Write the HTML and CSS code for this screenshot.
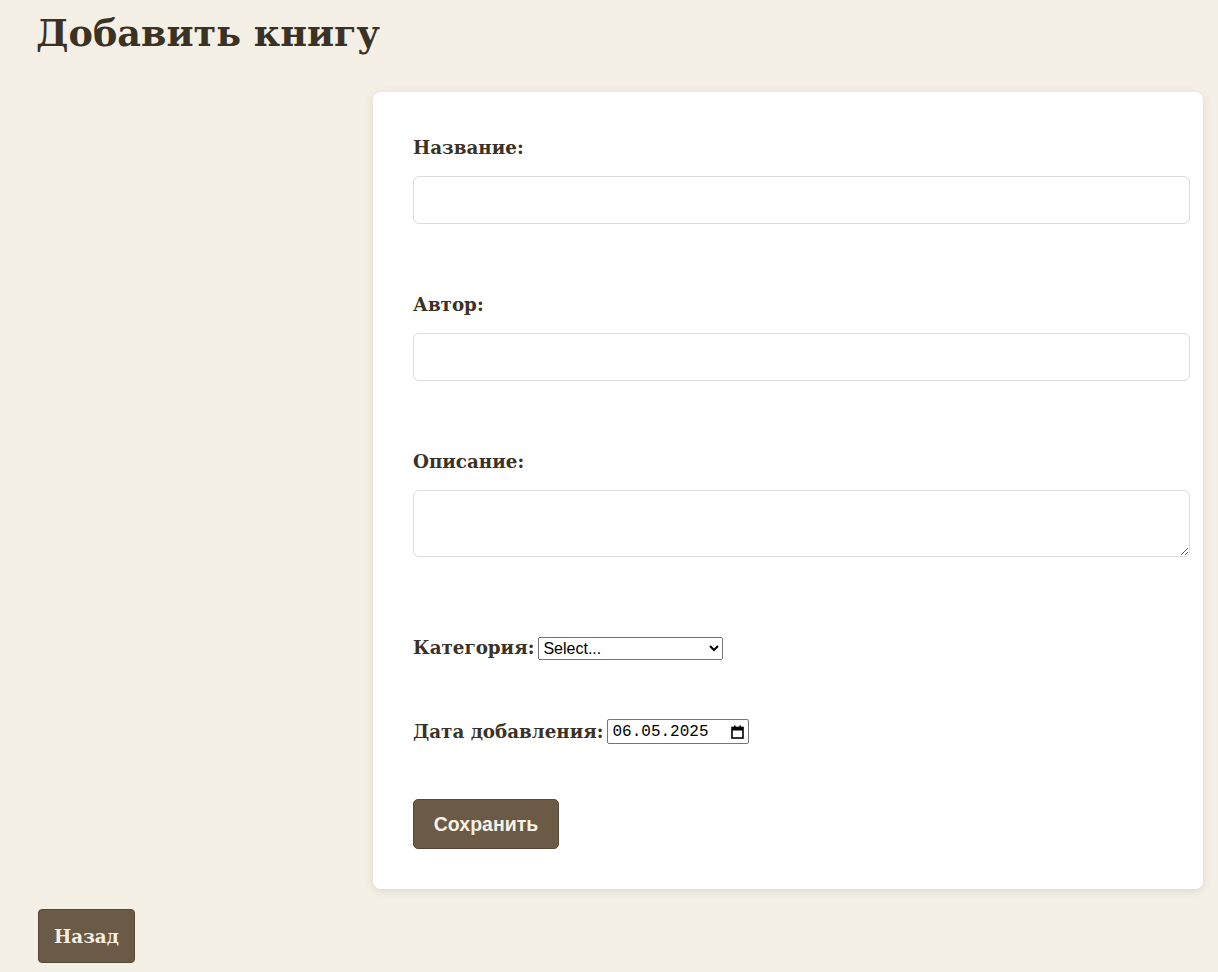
FILE: index.html
```html
<!DOCTYPE html>
<html lang="ru">
<head>
<meta charset="utf-8">
<title>Добавить книгу</title>
<link rel="stylesheet" href="styles.css">
</head>
<body>
<h1 class="title">Добавить книгу</h1>
<form class="card">
  <div class="field">
    <label class="field-label" for="name">Название:</label>
    <input class="text-input" id="name" type="text">
  </div>
  <div class="field">
    <label class="field-label" for="author">Автор:</label>
    <input class="text-input" id="author" type="text">
  </div>
  <div class="field">
    <label class="field-label" for="desc">Описание:</label>
    <textarea class="text-input text-area" id="desc" rows="2"></textarea>
  </div>
  <div class="inline-row row-category">
    <label class="inline-label" for="cat">Категория:</label>
    <select class="select" id="cat"><option>Select...</option></select>
  </div>
  <div class="inline-row row-date">
    <label class="inline-label" for="date">Дата добавления:</label>
    <span class="date-box">
      <input class="date-input" id="date" type="text" value="06.05.2025">
      <svg class="cal-icon" width="13" height="14" viewBox="0 0 13 14" aria-hidden="true">
        <rect x="1" y="2.5" width="11" height="10.5" fill="none" stroke="#000" stroke-width="1.6"/>
        <rect x="1" y="2.5" width="11" height="3" fill="#000"/>
        <rect x="3" y="0.5" width="1.6" height="2.5" fill="#000"/>
        <rect x="8.4" y="0.5" width="1.6" height="2.5" fill="#000"/>
      </svg>
    </span>
  </div>
  <button class="save-btn" type="button">Сохранить</button>
</form>
<a class="back-btn" href="#">Назад</a>
</body>
</html>
```
FILE: styles.css
```css
html, body {
  margin: 0;
  background: #f5f0e6;
}
body {
  padding: 0 15px 10px 36px;
  font-family: "DejaVu Serif", "Liberation Serif", serif;
  color: #3b3226;
}
.title {
  margin: 0;
  padding-top: 8px;
  height: 84px;
  font-size: 36.6px;
  line-height: 52px;
  font-weight: bold;
  color: #3b3226;
}
.card {
  width: 830px;
  box-sizing: border-box;
  margin-left: auto;
  background: #fff;
  border-radius: 8px;
  box-shadow: 0 2px 10px rgba(0, 0, 0, 0.1);
  padding: 45px 40px 40px 40px;
  display: flex;
  flex-direction: column;
  align-items: flex-start;
}
.field {
  width: 100%;
  margin-bottom: 70px;
}
.field:nth-child(3) {
  margin-bottom: 79px;
}
.field-label,
.inline-label {
  display: block;
  font-size: 18.3px;
  line-height: 22px;
  font-weight: bold;
  color: #3b3226;
}
.field-label {
  margin-bottom: 17px;
}
.text-input {
  display: block;
  width: 100%;
  box-sizing: content-box;
  height: 22px;
  padding: 12px 13px 12px 12px;
  border: 1px solid #dcdcdc;
  border-radius: 6px;
  font-family: "Liberation Sans", Arial, sans-serif;
  font-size: 16px;
  background: #fff;
}
.text-area {
  height: 41px;
  resize: vertical;
}
.inline-row {
  display: flex;
  align-items: center;
  gap: 4px;
}
.row-category {
  height: 24px;
  margin-bottom: 59px;
}
.row-date {
  height: 25px;
  margin-bottom: 55px;
}
.select {
  width: 185px;
  height: 23px;
  font-family: "Liberation Sans", Arial, sans-serif;
  font-size: 16px;
  color: #000;
}
.date-box {
  display: flex;
  align-items: center;
  width: 142px;
  height: 25px;
  box-sizing: border-box;
  padding: 0 4px 0 4px;
  border: 1px solid #767676;
  border-radius: 2px;
  background: #fff;
}
.date-input {
  flex: 1;
  min-width: 0;
  border: 0;
  padding: 0;
  margin: 0;
  outline: none;
  background: transparent;
  font-family: "Liberation Mono", monospace;
  font-size: 16px;
  color: #000;
}
.cal-icon {
  flex: none;
  margin-left: 4px;
}
.save-btn {
  width: 146px;
  height: 50px;
  background: #6b5a45;
  color: #f7f2e8;
  border: 1px solid #574835;
  border-radius: 5px;
  font-family: "Liberation Sans", Arial, sans-serif;
  font-size: 19.5px;
  font-weight: bold;
  cursor: pointer;
}
.back-btn {
  display: inline-flex;
  align-items: center;
  justify-content: center;
  margin: 20px 0 0 2px;
  width: 97px;
  height: 54px;
  box-sizing: border-box;
  background: #6b5a45;
  color: #f5f0e6;
  border: 1px solid #574835;
  border-radius: 4px;
  font-size: 18.3px;
  font-weight: bold;
  text-decoration: none;
}
```
